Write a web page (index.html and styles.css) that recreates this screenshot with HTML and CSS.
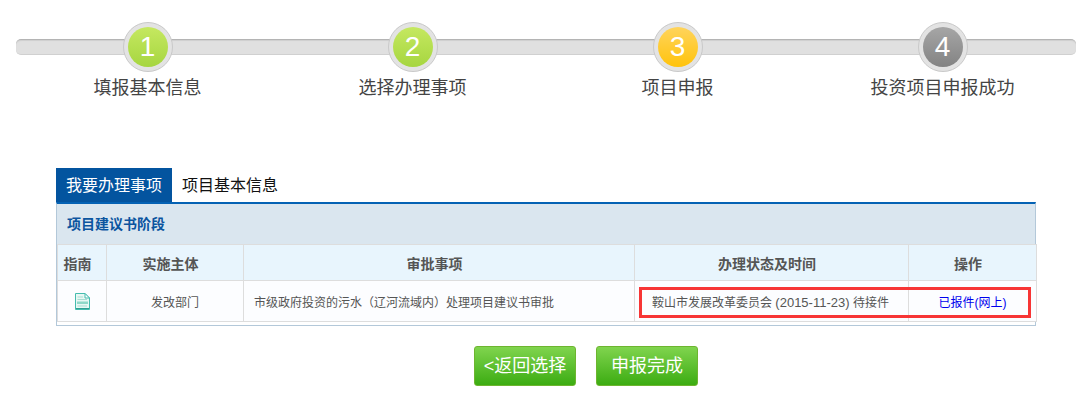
FILE: index.html
```html
<!DOCTYPE html>
<html>
    <head>
        <title>项目申报</title>
        <link rel="stylesheet" href="styles.css">
    </head>
    <body>
        <div class="steps">
            <div class="track"></div>
            <div class="step">
                <div class="ball"><span class="num done">1</span></div>
                <div class="step-name">填报基本信息</div>
            </div>
            <div class="step">
                <div class="ball"><span class="num done">2</span></div>
                <div class="step-name">选择办理事项</div>
            </div>
            <div class="step">
                <div class="ball"><span class="num current">3</span></div>
                <div class="step-name">项目申报</div>
            </div>
            <div class="step">
                <div class="ball"><span class="num todo">4</span></div>
                <div class="step-name">投资项目申报成功</div>
            </div>
        </div>

        <div class="panel">
            <div class="tabs">
                <div class="tab active">我要办理事项</div>
                <div class="tab">项目基本信息</div>
            </div>
            <div class="box">
                <div class="stage">项目建议书阶段</div>
                <div class="list">
                    <table>
                        <colgroup>
                            <col class="c1"><col class="c2"><col class="c3"><col class="c4"><col class="c5">
                        </colgroup>
                        <tr class="head">
                            <th>指南</th>
                            <th>实施主体</th>
                            <th>审批事项</th>
                            <th>办理状态及时间</th>
                            <th>操作</th>
                        </tr>
                        <tr class="row">
                            <td>
                                <svg class="doc" width="15" height="17" viewBox="0 0 15 17">
                                    <path d="M.5.5H10L14.500 5V16.500H.5Z" fill="#e8f8f4" stroke="#45bcae"/>
                                    <path d="M10 .5V5H14.500Z" fill="#fff" stroke="#45bcae"/>
                                    <path d="M2.500 4H8M2.500 6.500H12" stroke="#a9ddd2"/>
                                    <path d="M2 8.500H13V11H2Z" fill="#8fd8c8"/>
                                    <path d="M2.500 13H12" stroke="#a9ddd2"/>
                                    <path d="M1 15.500H14" stroke="#2f9f92"/>
                                </svg>
                            </td>
                            <td class="mid">发改部门</td>
                            <td class="name">市级政府投资的污水（辽河流域内）处理项目建议书审批</td>
                            <td class="status">鞍山市发展改革委员会 <span class="date">(2015-11-23)</span> 待接件</td>
                            <td class="mid"><a href="#" class="report">已报件(网上)</a></td>
                        </tr>
                    </table>
                    <div class="mark"></div>
                </div>
            </div>
        </div>

        <div class="actions">
            <a href="#" class="btn">&lt;返回选择</a>
            <a href="#" class="btn">申报完成</a>
        </div>
    </body>
</html>
```

FILE: styles.css
```css
html, body {
    margin: 0;
    height: 408px;
    overflow: hidden;
    background: #fff;
    font-family: "Liberation Sans", "Noto Sans CJK SC", sans-serif;
}

.steps {
    position: relative;
    display: flex;
    width: 1060px;
    margin: 22px 0 0 16px;
}

.track {
    position: absolute;
    top: 17px;
    left: 0;
    width: 100%;
    height: 16px;
    box-sizing: border-box;
    background: #e0e0e0;
    border-top: 1px solid #b4b4b4;
    border-bottom: 1px solid #d0d0d0;
    border-radius: 5px;
    box-shadow: inset 0 1px 1px #cfcfcf;
}

.step {
    position: relative;
    width: 265px;
    box-sizing: border-box;
    padding-right: 2px;
    text-align: center;
}

.ball {
    width: 50px;
    height: 50px;
    box-sizing: border-box;
    margin: 0 auto;
    padding: 4px;
    background: #e3e3e3;
    border: 1px solid #c9c9c9;
    border-radius: 50%;
}

.num {
    display: block;
    width: 40px;
    height: 40px;
    border-radius: 50%;
    color: #fff;
    font-size: 28px;
    line-height: 40px;
}

.done {
    background: linear-gradient(#c5e860, #a6d640);
}

.current {
    background: linear-gradient(#ffd45c, #ffc30c);
}

.todo {
    background: linear-gradient(#a6a6a6, #838383);
}

.step-name {
    margin-top: 3px;
    color: #444;
    font-size: 18px;
    line-height: 26px;
}

.panel {
    width: 980px;
    margin: 67px 0 0 56px;
}

.tabs {
    display: flex;
    height: 34px;
}

.tab {
    padding: 0 10px;
    color: #111;
    font-size: 16px;
    line-height: 36px;
}

.tab.active {
    background: #03549f;
    color: #fff;
}

.box {
    height: 124px;
    box-sizing: border-box;
    border: 1px solid #b3c8d9;
    border-top: 2px solid #0462b4;
}

.stage {
    height: 40px;
    padding-left: 10px;
    background: #dae6ef;
    color: #0b559f;
    font-size: 14px;
    font-weight: bold;
    line-height: 41px;
}

.list {
    position: relative;
}

table {
    width: 979px;
    border-collapse: collapse;
    table-layout: fixed;
}

.c1 { width: 49px; }
.c2 { width: 137px; }
.c3 { width: 391px; }
.c4 { width: 274px; }
.c5 { width: 128px; }

th, td {
    border: 1px solid #dddddd;
    padding: 0;
    text-align: center;
}

th {
    height: 35px;
    padding-right: 9px;
    background: #e8f5fd;
    color: #555;
    font-size: 14px;
}

td {
    height: 40px;
    background: #fcfdff;
    color: #555;
    font-size: 12px;
}

td.name {
    padding-left: 10px;
    text-align: left;
}

td.status {
    padding-left: 17px;
    text-align: left;
}

.date {
    font-size: 13px;
}

.doc {
    display: block;
    margin: 0 auto;
}

.report {
    color: #0000ee;
    text-decoration: none;
}

.mark {
    position: absolute;
    top: 43px;
    left: 582px;
    width: 392px;
    height: 31px;
    box-sizing: border-box;
    border: 3px solid #f73535;
}

.actions {
    display: flex;
    gap: 20px;
    margin: 20px 0 0 474px;
}

.btn {
    width: 102px;
    height: 40px;
    box-sizing: border-box;
    background: linear-gradient(#80d44e, #3cac12);
    border: 1px solid #6db52f;
    border-radius: 3px;
    color: #fff;
    font-size: 18px;
    line-height: 38px;
    text-align: center;
    text-decoration: none;
}
```
